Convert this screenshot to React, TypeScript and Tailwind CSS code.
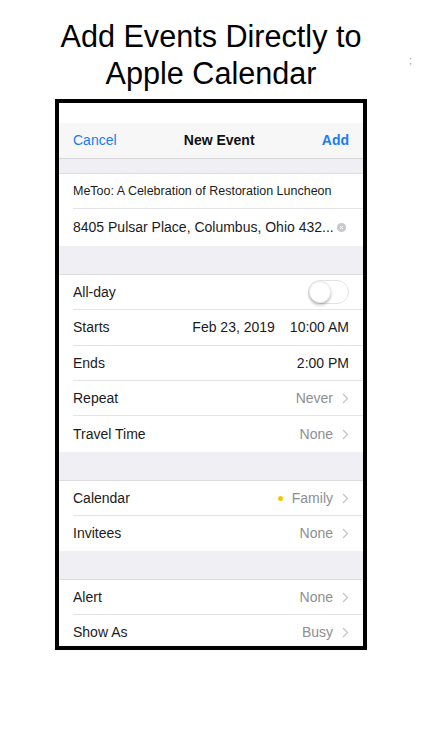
import React from 'react';

const font = { fontFamily: '"Liberation Sans", Arial, sans-serif' };

function Chevron() {
  return (
    <svg width="7" height="11" viewBox="0 0 7 11" className="ml-[9px] shrink-0">
      <path d="M1 1l4.5 4.5L1 10" fill="none" stroke="#c4c4c9" strokeWidth="1.3" />
    </svg>
  );
}

function Row({ label, value, chevron = true, last = false, h = 'h-[35px]', children }: {
  label: string;
  value?: string;
  chevron?: boolean;
  last?: boolean;
  h?: string;
  children?: React.ReactNode;
}) {
  return (
    <div className={`bg-white pl-[14px] ${h}`}>
      <div className={`flex h-full items-center pr-[14px] ${last ? '' : 'border-b border-[#e4e4e6]'}`}>
        <span className="text-[14px] text-[#1b1b1d]">{label}</span>
        <div className="ml-auto flex items-center">
          {children}
          {value && <span className="text-[14px] text-[#8e8e93]">{value}</span>}
          {chevron && value && <Chevron />}
        </div>
      </div>
    </div>
  );
}

function Gap({ h }: { h: string }) {
  return <div className={`${h} bg-[#efeff4] border-b border-[#dcdce0]`} />;
}

export default function App() {
  return (
    <div className="relative w-[422px] h-[750px] bg-white" style={font}>
      <h1 className="pt-[18px] text-center text-[30.6px] leading-[36.5px] text-black">
        Add Events Directly to
        <br />
        Apple Calendar
      </h1>
      <span className="absolute left-[409px] top-[52px] text-[11px] text-[#9a9a9a]">;</span>

      <div className="ml-[55px] mt-[8px] w-[312px] border-4 border-black">
        <div className="h-[543px] overflow-hidden bg-white">
          <div className="h-[20px] bg-white" />
          <div className="flex h-[36px] items-center justify-between border-b border-[#d6d6da] bg-[#f7f7f7] px-[14px]">
            <span className="text-[14px] text-[#1a7cf5]">Cancel</span>
            <span className="text-[14px] font-bold text-[#111]">New Event</span>
            <span className="text-[14px] font-bold text-[#1a7cf5]">Add</span>
          </div>
          <Gap h="h-[15px]" />

          <div className="bg-white pl-[14px]">
            <div className="flex h-[35px] items-center border-b border-[#e4e4e6] text-[12.5px] text-[#1b1b1d]">
              MeToo: A Celebration of Restoration Luncheon
            </div>
            <div className="flex h-[37px] items-center pr-[17px] text-[14px] text-[#1b1b1d]">
              <span>8405 Pulsar Place, Columbus, Ohio 432...</span>
              <span className="ml-auto flex h-[9px] w-[9px] items-center justify-center rounded-full bg-[#c7c7cc]">
                <svg width="5" height="5" viewBox="0 0 5 5">
                  <path d="M1 1l3 3M4 1L1 4" stroke="white" strokeWidth="1" />
                </svg>
              </span>
            </div>
          </div>
          <Gap h="h-[29px]" />

          <Row label="All-day" chevron={false}>
            <div className="relative h-[24px] w-[41px] rounded-full border border-[#e3e3e6] bg-white">
              <div className="absolute left-0 top-0 h-[22px] w-[22px] rounded-full bg-white shadow-[0_2px_3px_rgba(0,0,0,0.25)] border border-[#ececec]" />
            </div>
          </Row>
          <Row label="Starts" chevron={false} h="h-[36px]">
            <span className="text-[14px] text-[#1b1b1d]">Feb 23, 2019</span>
            <span className="ml-[15px] text-[14px] text-[#1b1b1d]">10:00 AM</span>
          </Row>
          <Row label="Ends" chevron={false}>
            <span className="text-[14px] text-[#1b1b1d]">2:00 PM</span>
          </Row>
          <Row label="Repeat" value="Never" />
          <Row label="Travel Time" value="None" last h="h-[36px]" />
          <Gap h="h-[29px]" />

          <Row label="Calendar" value="Family">
            <span className="mr-[9px] h-[5px] w-[5px] rounded-full bg-[#f7c600]" />
          </Row>
          <Row label="Invitees" value="None" last />
          <Gap h="h-[29px]" />

          <Row label="Alert" value="None" />
          <Row label="Show As" value="Busy" last />
        </div>
      </div>
    </div>
  );
}
